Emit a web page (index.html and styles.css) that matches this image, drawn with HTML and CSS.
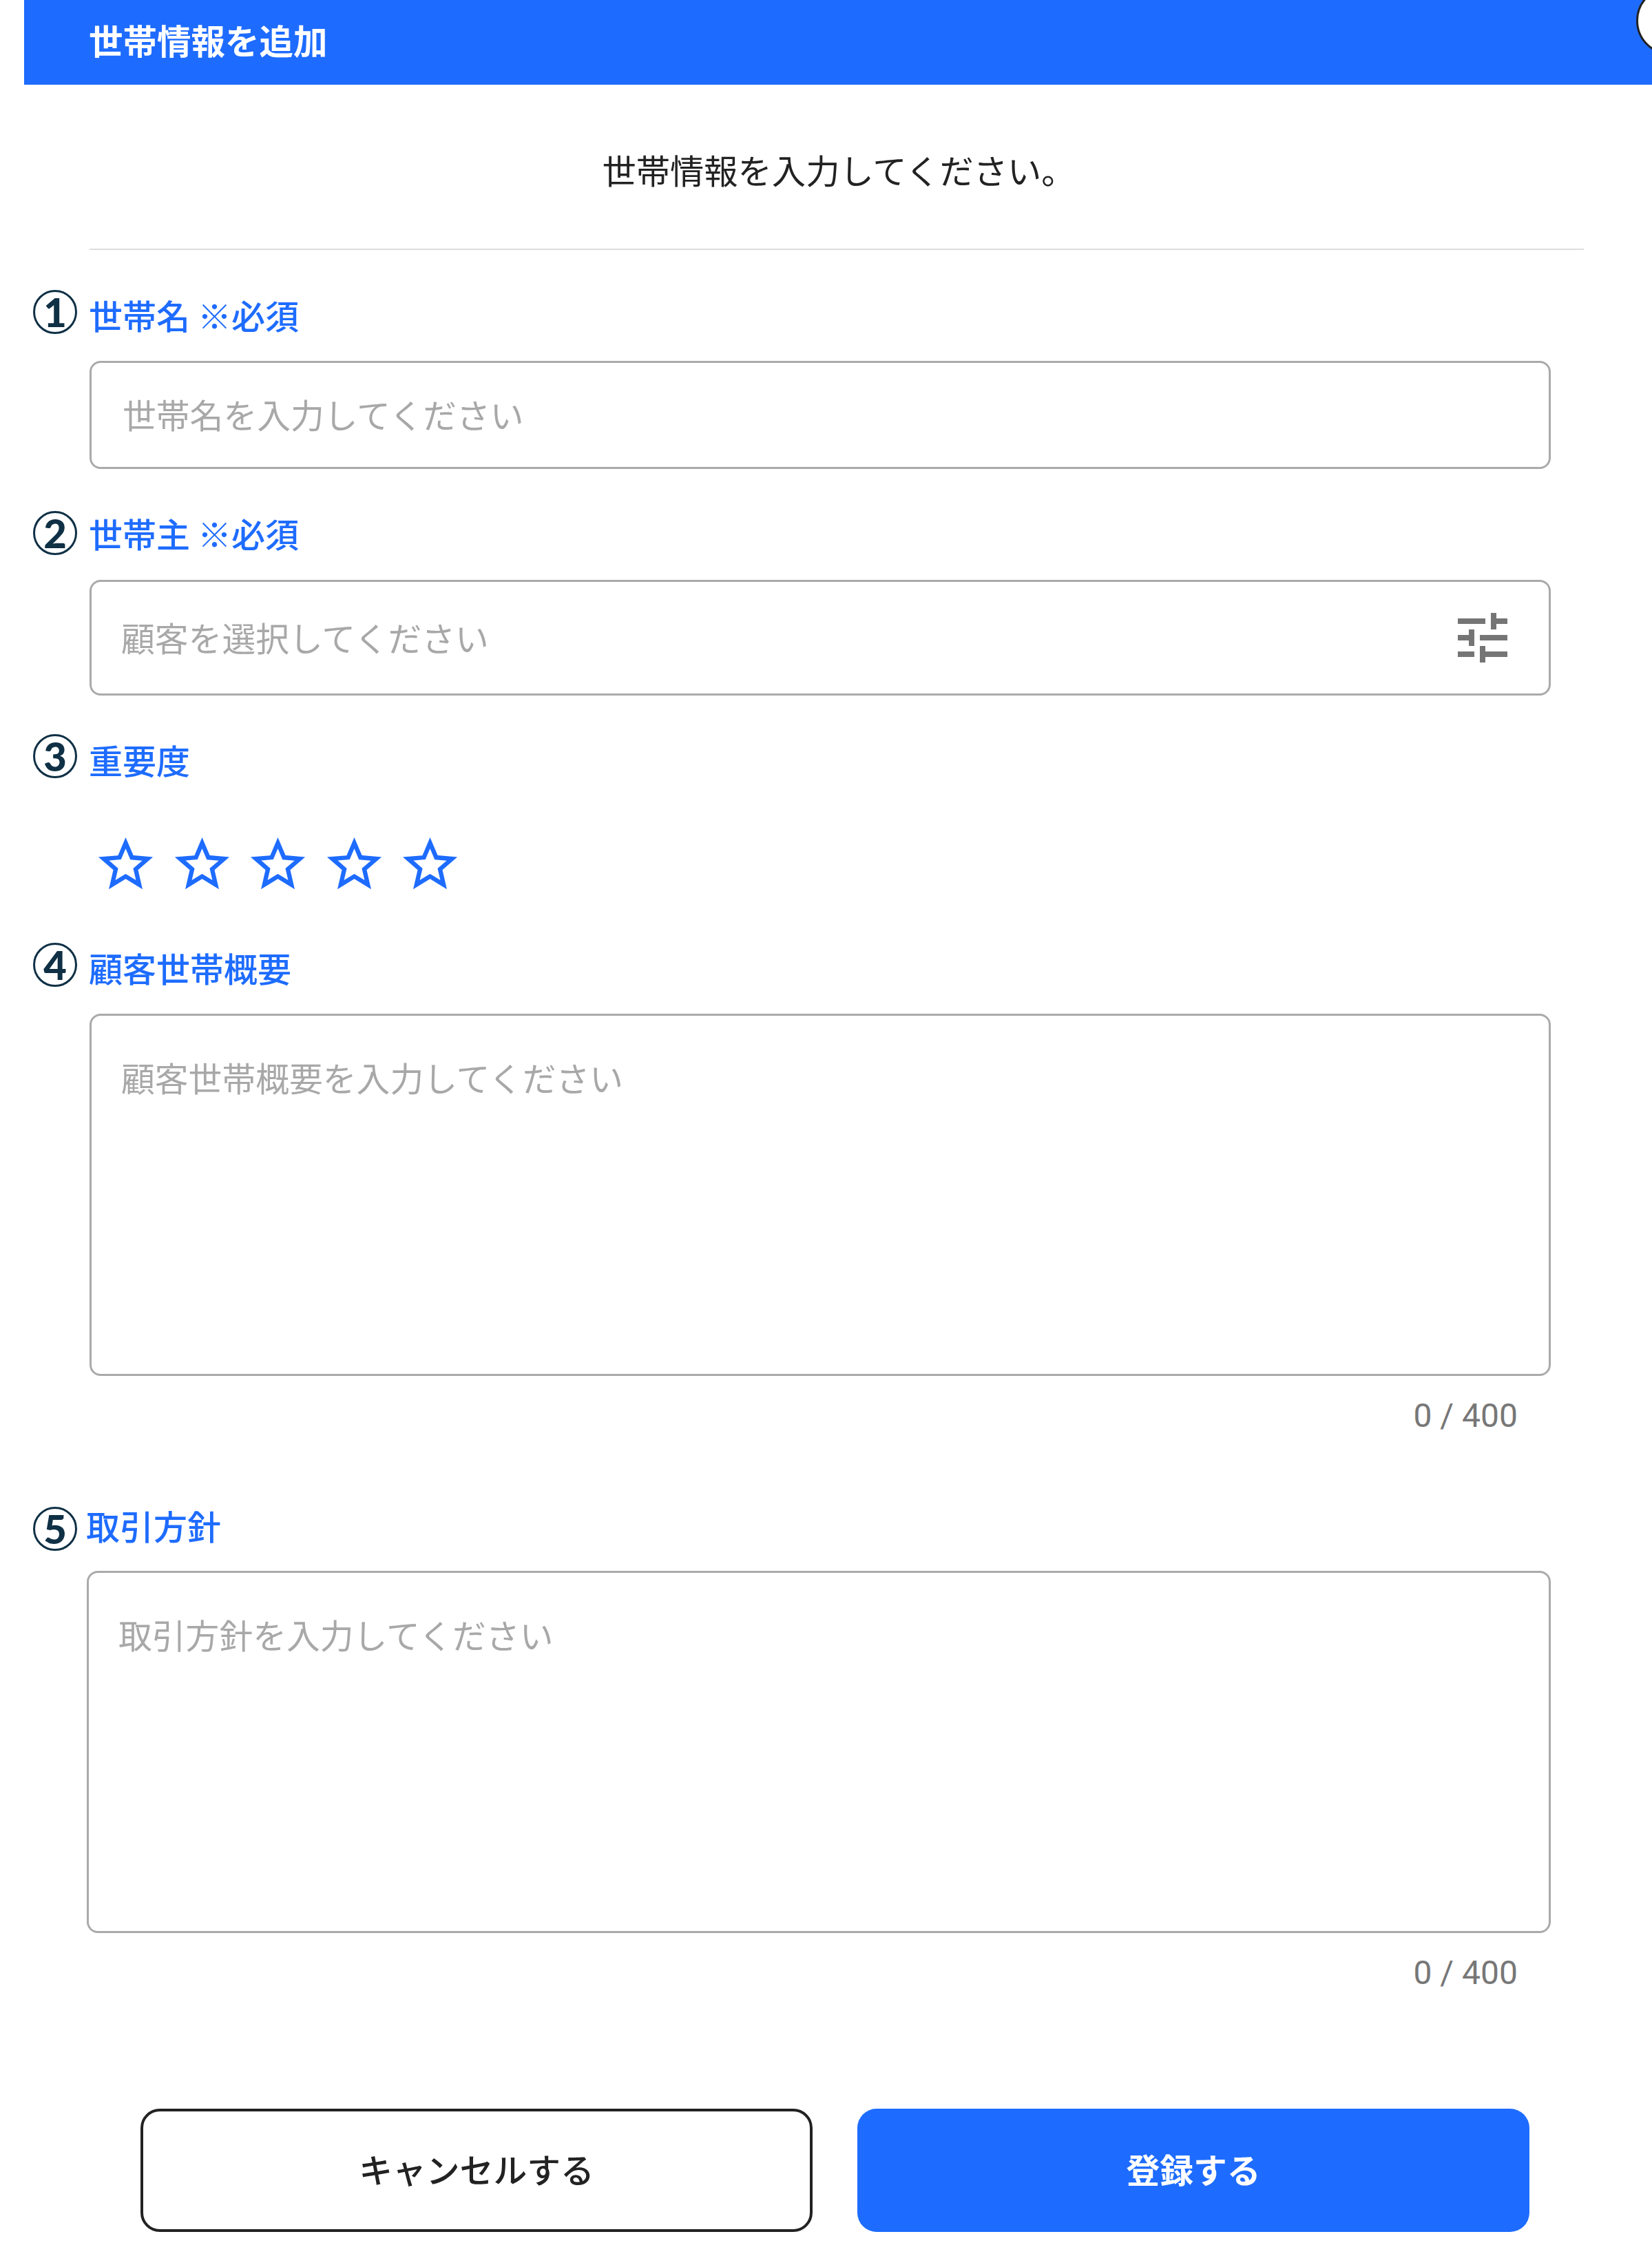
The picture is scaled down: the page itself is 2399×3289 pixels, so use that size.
FILE: index.html
```html
<!DOCTYPE html>
<html lang="ja">
<head>
    <meta charset="utf-8">
    <title>世帯情報を追加</title>
    <link rel="stylesheet" href="styles.css">
</head>
<body>
    <div class="modal">
        <!-- Title bar -->
        <header class="modal-header">世帯情報を追加</header>
        <button class="close-button" type="button" aria-label="閉じる"></button>

        <p class="intro">世帯情報を入力してください。</p>
        <div class="divider"></div>

        <form class="form">
            <!-- 1: household name -->
            <div class="field field-name">
                <div class="field-head">
                    <span class="badge">1</span>
                    <label class="field-label">世帯名 ※必須</label>
                </div>
                <input class="text-input" type="text" placeholder="世帯名を入力してください">
            </div>

            <!-- 2: head of household -->
            <div class="field field-owner">
                <div class="field-head">
                    <span class="badge">2</span>
                    <label class="field-label">世帯主 ※必須</label>
                </div>
                <div class="select-box">
                    <input class="select-input" type="text" placeholder="顧客を選択してください">
                    <svg class="tune-icon" viewBox="0 0 24 24"><path d="M3 17v2h6v-2H3zM3 5v2h10V5H3zm10 16v-2h8v-2h-8v-2h-2v6h2zM7 9v2H3v2h4v2h2V9H7zm14 4v-2H11v2h10zm-6-4h2V7h4V5h-4V3h-2v6z"/></svg>
                </div>
            </div>

            <!-- 3: importance -->
            <div class="field field-rank">
                <div class="field-head">
                    <span class="badge">3</span>
                    <label class="field-label">重要度</label>
                </div>
                <div class="stars">
                    <svg class="star" viewBox="0 0 24 24"><path d="M22 9.24l-7.19-.62L12 2 9.19 8.63 2 9.24l5.46 4.73L5.82 21 12 17.27 18.18 21l-1.63-7.03L22 9.24zM12 15.4l-3.76 2.27 1-4.28-3.32-2.88 4.38-.38L12 6.1l1.71 4.04 4.38.38-3.32 2.88 1 4.28L12 15.4z"/></svg>
                    <svg class="star" viewBox="0 0 24 24"><path d="M22 9.24l-7.19-.62L12 2 9.19 8.63 2 9.24l5.46 4.73L5.82 21 12 17.27 18.18 21l-1.63-7.03L22 9.24zM12 15.4l-3.76 2.27 1-4.28-3.32-2.88 4.38-.38L12 6.1l1.71 4.04 4.38.38-3.32 2.88 1 4.28L12 15.4z"/></svg>
                    <svg class="star" viewBox="0 0 24 24"><path d="M22 9.24l-7.19-.62L12 2 9.19 8.63 2 9.24l5.46 4.73L5.82 21 12 17.27 18.18 21l-1.63-7.03L22 9.24zM12 15.4l-3.76 2.27 1-4.28-3.32-2.88 4.38-.38L12 6.1l1.71 4.04 4.38.38-3.32 2.88 1 4.28L12 15.4z"/></svg>
                    <svg class="star" viewBox="0 0 24 24"><path d="M22 9.24l-7.19-.62L12 2 9.19 8.63 2 9.24l5.46 4.73L5.82 21 12 17.27 18.18 21l-1.63-7.03L22 9.24zM12 15.4l-3.76 2.27 1-4.28-3.32-2.88 4.38-.38L12 6.1l1.71 4.04 4.38.38-3.32 2.88 1 4.28L12 15.4z"/></svg>
                    <svg class="star" viewBox="0 0 24 24"><path d="M22 9.24l-7.19-.62L12 2 9.19 8.63 2 9.24l5.46 4.73L5.82 21 12 17.27 18.18 21l-1.63-7.03L22 9.24zM12 15.4l-3.76 2.27 1-4.28-3.32-2.88 4.38-.38L12 6.1l1.71 4.04 4.38.38-3.32 2.88 1 4.28L12 15.4z"/></svg>
                </div>
            </div>

            <!-- 4: household summary -->
            <div class="field field-summary">
                <div class="field-head">
                    <span class="badge">4</span>
                    <label class="field-label">顧客世帯概要</label>
                </div>
                <textarea class="text-area" placeholder="顧客世帯概要を入力してください"></textarea>
                <div class="counter">0 / 400</div>
            </div>

            <!-- 5: trading policy -->
            <div class="field field-policy">
                <div class="field-head">
                    <span class="badge">5</span>
                    <label class="field-label">取引方針</label>
                </div>
                <textarea class="text-area" placeholder="取引方針を入力してください"></textarea>
                <div class="counter">0 / 400</div>
            </div>

            <!-- Footer buttons -->
            <div class="actions">
                <button class="button button-cancel" type="button">キャンセルする</button>
                <button class="button button-submit" type="button">登録する</button>
            </div>
        </form>
    </div>
</body>
</html>
```

FILE: styles.css
```css
/* Page */
html, body {
    margin: 0;
    height: 3289px;
    overflow: hidden;
    background: #fff;
}

body {
    font-family: "Noto Sans CJK JP", "Noto Sans", sans-serif;
    color: #222;
}

.modal {
    position: relative;
    width: 2399px;
}

/* Title bar */
.modal-header {
    display: flex;
    align-items: center;
    height: 123px;
    margin-left: 35px;
    padding-left: 94px;
    padding-bottom: 8px;
    box-sizing: border-box;
    background: #1e6cff;
    color: #fff;
    font-size: 49.5px;
    font-weight: 700;
}

/* Close button, mostly cut off by the window edge */
.close-button {
    position: absolute;
    left: 2376px;
    top: -20px;
    width: 100px;
    height: 100px;
    padding: 0;
    border: 3px solid #222;
    border-radius: 50%;
    background: #fff;
}

.intro {
    display: flex;
    justify-content: center;
    align-items: center;
    height: 231px;
    margin: 0;
    padding-top: 7px;
    padding-left: 37px;
    font-size: 49.3px;
}

.divider {
    height: 2px;
    width: 2170px;
    margin-left: 130px;
    background: #ddd;
}

/* Form */
.form {
    padding-left: 48px;
    width: 2204px;
}

.field-head {
    display: flex;
    align-items: center;
    gap: 17px;
}

.badge {
    display: flex;
    justify-content: center;
    align-items: center;
    width: 64px;
    height: 64px;
    box-sizing: border-box;
    border: 3px solid #0f3045;
    border-radius: 50%;
    color: #0f3045;
    font-family: Lato, sans-serif;
    font-size: 58px;
    font-weight: 900;
    line-height: 1;
}

.field-label {
    color: #1e6cff;
    font-size: 49px;
    font-weight: 500;
    line-height: 40px;
}

.text-input,
.select-box,
.text-area {
    display: flex;
    width: 100%;
    margin-left: 82px;
    box-sizing: border-box;
    border: 3px solid #aaa;
    border-radius: 16px;
    background: #fff;
    font-family: inherit;
    font-size: 48.8px;
}

.text-input {
    width: 2122px;
    height: 157px;
    padding: 0 45px 4px;
}

.select-box {
    width: 2122px;
    height: 168px;
    align-items: center;
    padding-left: 43px;
    padding-right: 47px;
}

.select-input {
    flex: 1;
    border: 0;
    padding: 0 0 4px;
    font-family: inherit;
    font-size: 48.8px;
}

.tune-icon {
    width: 98px;
    height: 96px;
    fill: #757575;
}

.text-area {
    width: 2122px;
    height: 526px;
    padding: 55px 43px 0;
    line-height: 68px;
    resize: none;
}

input::placeholder,
textarea::placeholder {
    color: #a8a8a8;
    opacity: 1;
}

.counter {
    margin-top: 28px;
    padding-right: 48px;
    text-align: right;
    color: #777;
    font-family: Roboto, sans-serif;
    font-size: 48px;
    line-height: 60px;
}

/* Star rating */
.stars {
    display: flex;
    gap: 15.5px;
    margin-left: 87px;
}

.star {
    width: 95px;
    height: 95px;
    fill: #1e6cff;
}

/* Per-field spacing */
.field-name {
    margin-top: 58px;
}

.field-name .field-head {
    margin-bottom: 39px;
}

.field-name .field-label {
    margin-top: 7px;
}

.field-owner {
    margin-top: 61px;
}

.field-owner .field-head {
    margin-bottom: 36px;
}

.field-owner .field-label {
    margin-top: 0;
}

.field-rank {
    margin-top: 56px;
}

.field-rank .field-head {
    margin-bottom: 78px;
}

.field-rank .field-label {
    margin-top: 9px;
}

.field-summary {
    margin-top: 66px;
}

.field-summary .field-head {
    margin-bottom: 39px;
}

.field-summary .field-label {
    margin-top: 7px;
}

.field-policy {
    margin-top: 102px;
}

.field-policy .field-head {
    gap: 13px;
    margin-bottom: 29px;
}

.field-policy .text-area {
    width: 2126px;
    margin-left: 78px;
}

.field-policy .field-label {
    margin-top: -11px;
}

/* Footer buttons */
.actions {
    display: flex;
    gap: 65px;
    margin-top: 167px;
    margin-left: 156px;
}

.button {
    width: 976px;
    height: 179px;
    padding-bottom: 8px;
    border-radius: 28px;
    font-family: inherit;
    font-size: 48.8px;
}

.button-cancel {
    border: 4px solid #222;
    background: #fff;
    color: #222;
    font-weight: 500;
}

.button-submit {
    border: 0;
    background: #1e6cff;
    color: #fff;
    font-weight: 700;
}
```
